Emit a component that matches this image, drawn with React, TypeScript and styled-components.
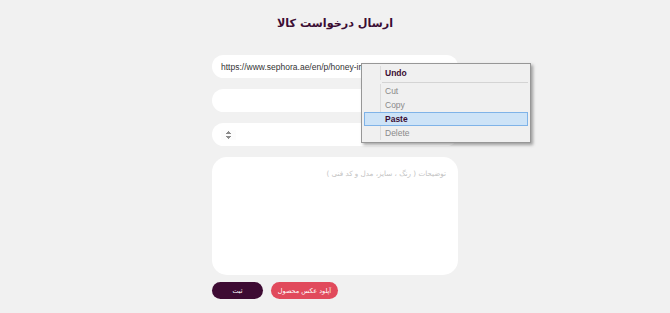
import React from 'react';
import styled, { createGlobalStyle } from 'styled-components';

const GlobalStyle = createGlobalStyle`
  html, body {
    margin: 0;
    padding: 0;
    background: #f1f1f1;
    font-family: "DejaVu Sans", "Liberation Sans", sans-serif;
  }
`;

const Page = styled.div`
  position: relative;
  width: 670px;
  height: 313px;
  overflow: hidden;
`;

const Form = styled.form`
  width: 246px;
  margin: 0 auto;
  padding-top: 13px;
  display: flex;
  flex-direction: column;
  direction: rtl;
`;

const Title = styled.h1`
  margin: 0 0 20px;
  text-align: center;
  font-size: 11.2px;
  font-weight: bold;
  color: #3b0d33;
  line-height: 22px;
`;

const Field = styled.input`
  box-sizing: border-box;
  height: 23px;
  margin-bottom: 11px;
  border: none;
  outline: none;
  border-radius: 12px;
  background: #fff;
  padding: 0 9px;
  font-family: "Liberation Sans", Arial, sans-serif;
  font-size: 8.5px;
  color: #333;

  &[type='number']::-webkit-inner-spin-button {
    opacity: 1;
    width: 7px;
    height: 10px;
  }
`;

const Notes = styled.textarea`
  box-sizing: border-box;
  height: 118px;
  border: none;
  outline: none;
  resize: none;
  border-radius: 15px;
  background: #fff;
  padding: 12px 12px;
  font-family: "DejaVu Sans", sans-serif;
  font-size: 7.2px;

  &::placeholder {
    color: #c4c4c4;
  }
`;

const Actions = styled.div`
  display: flex;
  direction: ltr;
  gap: 8px;
  margin-top: 7px;
`;

const Button = styled.button<{ $tone: 'dark' | 'red' }>`
  height: 17px;
  border: none;
  border-radius: 9px;
  padding: 0;
  font-family: "DejaVu Sans", sans-serif;
  font-size: 6.5px;
  color: #fff;
  background: ${p => (p.$tone === 'dark' ? '#3d0b33' : '#e14a5c')};
  width: ${p => (p.$tone === 'dark' ? '51px' : '67px')};
`;

const Menu = styled.div`
  position: absolute;
  left: 361px;
  top: 63px;
  width: 170px;
  box-sizing: border-box;
  padding: 2px;
  background: #f0f0f0;
  border: 1px solid #979797;
  box-shadow: 2px 2px 3px rgba(0, 0, 0, 0.35);
  font-family: "Liberation Sans", Arial, sans-serif;
  font-size: 8.5px;
`;

const MenuItem = styled.div<{ $bold?: boolean; $disabled?: boolean; $active?: boolean }>`
  position: relative;
  height: 14px;
  line-height: 12px;
  padding-left: 20px;
  box-sizing: border-box;
  font-weight: ${p => (p.$bold ? 'bold' : 'normal')};
  color: ${p => (p.$bold ? '#3b0d33' : p.$disabled ? '#8a8a8a' : '#000')};
  background: ${p => (p.$active ? '#cde3f7' : 'transparent')};
  border: 1px solid ${p => (p.$active ? '#7fb3e8' : 'transparent')};

  &::before {
    content: '';
    position: absolute;
    left: 15px;
    top: -1px;
    bottom: -1px;
    width: 1px;
    background: ${p => (p.$active ? 'transparent' : '#dcdcdc')};
  }
`;

const MenuSeparator = styled.div`
  height: 1px;
  margin: 2px 0 1px 18px;
  background: #d4d4d4;
`;

export default function App() {
  return (
    <Page>
      <GlobalStyle />
      <Form onSubmit={e => e.preventDefault()}>
        <Title>ارسال درخواست کالا</Title>
        <Field
          dir="ltr"
          defaultValue="https://www.sephora.ae/en/p/honey-infused-lip-oil-P10050071"
        />
        <Field />
        <Field type="number" />
        <Notes placeholder="توضیحات ( رنگ ، سایز، مدل و کد فنی )" />
        <Actions>
          <Button type="submit" $tone="dark">ثبت</Button>
          <Button type="button" $tone="red">آپلود عکس محصول</Button>
        </Actions>
      </Form>
      <Menu>
        <MenuItem $bold>Undo</MenuItem>
        <MenuSeparator />
        <MenuItem $disabled>Cut</MenuItem>
        <MenuItem $disabled>Copy</MenuItem>
        <MenuItem $active $bold>Paste</MenuItem>
        <MenuItem $disabled>Delete</MenuItem>
      </Menu>
    </Page>
  );
}
